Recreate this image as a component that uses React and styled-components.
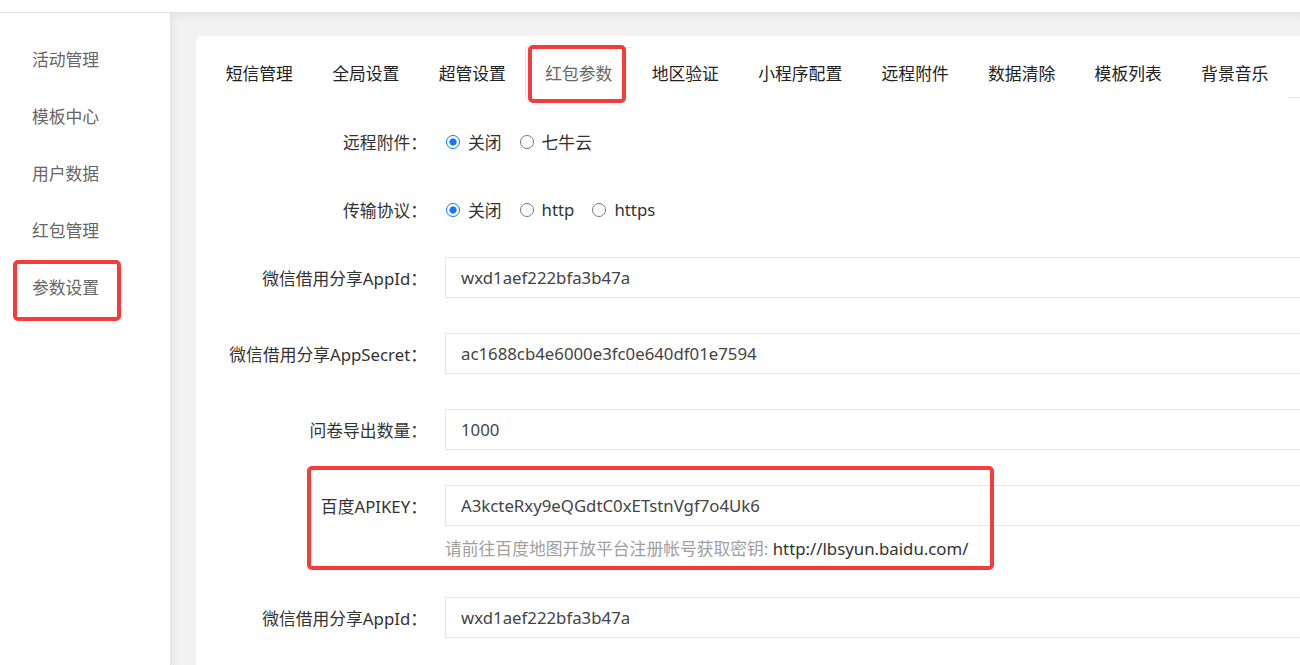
import React from "react";
import styled, { createGlobalStyle } from "styled-components";

const GlobalStyle = createGlobalStyle`
  html, body {
    margin: 0;
    padding: 0;
    height: 100%;
    overflow: hidden;
    background: #ffffff;
  }
  body {
    font-family: "Noto Sans", "Noto Sans CJK SC", sans-serif;
    font-size: 16.8px;
    color: #333;
  }
  #root { height: 100%; }
  *, *::before, *::after { box-sizing: border-box; }
`;

const Page = styled.div`
  display: flex;
  flex-direction: column;
  height: 665px;
`;

const TopBar = styled.div`
  height: 13px;
  flex: none;
  background: #fff;
  border-bottom: 1px solid #e2e2e2;
`;

const Body = styled.div`
  flex: 1;
  display: flex;
  min-height: 0;
`;

const Sidebar = styled.nav`
  width: 171px;
  flex: none;
  background: #fff;
  border-right: 1px solid #e0e0e0;
  padding-top: 18px;
`;

const NavItem = styled.div`
  position: relative;
  height: 57px;
  line-height: 57px;
  padding-left: 32px;
  color: #666;
  font-size: 16.8px;
  white-space: nowrap;

  ${(p) =>
    p.$marked &&
    `
    &::after {
      content: "";
      position: absolute;
      left: 13px;
      top: 1px;
      width: 108px;
      height: 61px;
      border: 4px solid #f53b3b;
      border-radius: 5px;
      pointer-events: none;
    }
  `}
`;

const Main = styled.main`
  flex: 1;
  min-width: 0;
  background: #f2f2f2;
  padding: 23px 0 0 25px;
  overflow: hidden;
  box-shadow: inset 4px 5px 8px -2px rgba(0, 0, 0, 0.06);
`;

const Card = styled.section`
  background: #fff;
  border-radius: 6px 0 0 0;
  margin-right: -80px;
  height: 100%;
  padding: 11px 0 0 10px;
`;

const TabBar = styled.div`
  display: flex;
  border-bottom: 1px solid #e2e2e2;
  height: 51px;
`;

const Tab = styled.div`
  position: relative;
  height: 51px;
  line-height: 51px;
  padding: 0 19.7px;
  font-size: 16.8px;
  color: ${(p) => (p.$active ? "#666" : "#222")};
  white-space: nowrap;
  border: 1px solid ${(p) => (p.$active ? "#e2e2e2" : "transparent")};
  border-bottom: none;
  border-radius: 2px 2px 0 0;
  margin: 0 -1px;
  background: #fff;
  ${(p) =>
    p.$active &&
    `
    &::before {
      content: "";
      position: absolute;
      left: 0;
      right: 0;
      bottom: -1px;
      height: 1px;
      background: #fff;
    }
    &::after {
      content: "";
      position: absolute;
      left: 2px;
      top: -3px;
      width: 98px;
      height: 58px;
      border: 4px solid #f53b3b;
      border-radius: 5px;
      pointer-events: none;
    }
  `}
`;

const Form = styled.div`
  display: flex;
  flex-direction: column;
`;

const Row = styled.div`
  display: flex;
  align-items: center;
  height: 41px;
  margin-top: ${(p) => p.$mt}px;
`;

const Label = styled.label`
  width: 239px;
  flex: none;
  text-align: right;
  padding-right: 18px;
  color: #333;
  font-size: 16.8px;
  white-space: nowrap;
`;

const RadioGroup = styled.div`
  display: flex;
  align-items: center;
`;

const RadioOption = styled.label`
  display: flex;
  align-items: center;
  margin-right: 17px;
  color: #333;
  font-size: 16.8px;
`;

const Radio = styled.input.attrs({ type: "radio" })`
  appearance: none;
  -webkit-appearance: none;
  width: 14px;
  height: 14px;
  margin: 0 8px 0 1px;
  border-radius: 50%;
  border: 1.5px solid #787878;
  background: #fff;
  flex: none;

  &:checked {
    border-color: #1577ff;
    background: radial-gradient(circle, #1577ff 0 3.3px, #fff 3.9px);
  }
`;

const TextInput = styled.input`
  flex: 1;
  height: 41px;
  border: 1px solid #e6e6e6;
  padding: 0 15px;
  font-family: "Noto Sans", "Noto Sans CJK SC", sans-serif;
  font-size: 16.8px;
  color: #444;
  background: #fff;
  outline: none;
`;

const Marked = styled.div`
  position: relative;
  margin-top: ${(p) => p.$mt}px;

  &::after {
    content: "";
    position: absolute;
    left: 101px;
    top: -19px;
    width: 687px;
    height: 104px;
    border: 4px solid #f53b3b;
    border-radius: 5px;
    pointer-events: none;
  }
`;

const Hint = styled.div`
  padding-left: 239px;
  margin-top: 10px;
  line-height: 26px;
  font-size: 16.8px;
  color: #a0a0a0;
  white-space: nowrap;
`;

const HintLink = styled.span`
  color: #333;
`;

const navItems = ["活动管理", "模板中心", "用户数据", "红包管理", "参数设置"];
const tabs = [
  "短信管理",
  "全局设置",
  "超管设置",
  "红包参数",
  "地区验证",
  "小程序配置",
  "远程附件",
  "数据清除",
  "模板列表",
  "背景音乐",
];

function RadioRow({ label, name, options, mt }) {
  return (
    <Row $mt={mt}>
      <Label>{label}</Label>
      <RadioGroup>
        {options.map((o, i) => (
          <RadioOption key={o}>
            <Radio name={name} defaultChecked={i === 0} />
            {o}
          </RadioOption>
        ))}
      </RadioGroup>
    </Row>
  );
}

function InputRow({ label, value, mt }) {
  return (
    <Row $mt={mt}>
      <Label>{label}</Label>
      <TextInput defaultValue={value} />
    </Row>
  );
}

export default function App() {
  return (
    <>
      <GlobalStyle />
      <Page>
        <TopBar />
        <Body>
          <Sidebar>
            {navItems.map((n) => (
              <NavItem key={n} $marked={n === "参数设置"}>
                {n}
              </NavItem>
            ))}
          </Sidebar>
          <Main>
            <Card>
              <TabBar>
                {tabs.map((t) => (
                  <Tab key={t} $active={t === "红包参数"}>
                    {t}
                  </Tab>
                ))}
              </TabBar>
              <Form>
                <RadioRow label="远程附件：" name="remote" options={["关闭", "七牛云"]} mt={23} />
                <RadioRow label="传输协议：" name="proto" options={["关闭", "http", "https"]} mt={27} />
                <InputRow label="微信借用分享AppId：" value="wxd1aef222bfa3b47a" mt={27} />
                <InputRow label="微信借用分享AppSecret：" value="ac1688cb4e6000e3fc0e640df01e7594" mt={35} />
                <InputRow label="问卷导出数量：" value="1000" mt={35} />
                <Marked $mt={35}>
                  <Row $mt={0}>
                    <Label>百度APIKEY：</Label>
                    <TextInput defaultValue="A3kcteRxy9eQGdtC0xETstnVgf7o4Uk6" />
                  </Row>
                  <Hint>
                    请前往百度地图开放平台注册帐号获取密钥: <HintLink>http://lbsyun.baidu.com/</HintLink>
                  </Hint>
                </Marked>
                <InputRow label="微信借用分享AppId：" value="wxd1aef222bfa3b47a" mt={35} />
              </Form>
            </Card>
          </Main>
        </Body>
      </Page>
    </>
  );
}
